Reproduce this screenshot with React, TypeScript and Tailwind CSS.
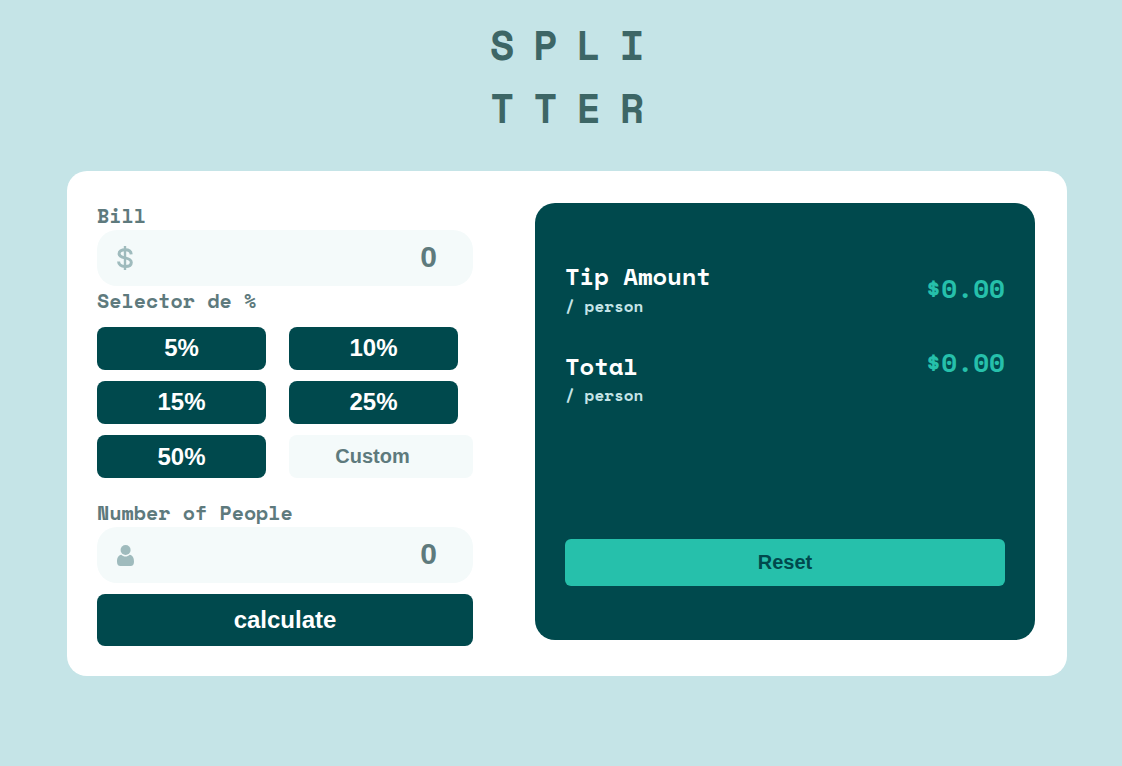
import { useState } from "react";

const mono = "font-['Space_Mono','Liberation_Mono',monospace] font-bold";
const sans = "font-['Liberation_Sans',Arial,sans-serif] font-bold";

function DollarIcon() {
  return (
    <svg width="16" height="24" viewBox="0 0 16 24" fill="none" stroke="#9fbbbd" className="block shrink-0">
      <path d="M14.2 8.3C14 5.3 11.8 3.8 8.1 3.8C4.5 3.8 2.1 5.2 2.1 7.8C2.1 10.3 4.2 11.1 8 11.9C12.1 12.7 14.3 13.6 14.3 16.4C14.3 19 11.8 20.4 8.1 20.4C4.1 20.4 1.6 18.7 1.6 15.4" strokeWidth="3" />
      <path d="M8 0V24" strokeWidth="2.4" />
    </svg>
  );
}

function PersonIcon() {
  return (
    <svg width="17" height="21" viewBox="0 0 17 21" fill="#9fbbbd" className="block shrink-0">
      <circle cx="8.6" cy="5" r="5" />
      <path d="M4.3 9.8C5.4 11 7 11.6 8.5 11.6C10 11.6 11.6 11 12.7 9.8C15.7 10.2 17 13 17 16.8C17 19.6 15.8 21 13.6 21H3.4C1.2 21 0 19.6 0 16.8C0 13 1.3 10.2 4.3 9.8Z" />
    </svg>
  );
}

function Label({ children }: { children: string }) {
  return <div className={`${mono} h-7 text-[20px] leading-7 text-[#5e7a7d]`}>{children}</div>;
}

function Field({ icon, value, onChange }: { icon: React.ReactNode; value: string; onChange: (v: string) => void }) {
  return (
    <div className="flex h-14 items-center rounded-[20px] bg-[#f4fafa] pr-[36px] pl-5">
      {icon}
      <input
        className={`${sans} mb-[2px] min-w-0 flex-1 bg-transparent text-right text-[30px] leading-9 text-[#5e7a7d] outline-none`}
        value={value}
        onChange={(e) => onChange(e.target.value)}
      />
    </div>
  );
}

function Result({ title, amount, className }: { title: string; amount: string; className: string }) {
  return (
    <div className={`flex justify-between ${className}`}>
      <div>
        <div className="h-9 text-[24px] leading-9 tracking-[-0.1px] text-white">{title}</div>
        <div className="h-6 text-[16px] leading-6 text-[#c5e4e7]">/ person</div>
      </div>
      <div className="h-10 text-[26px] leading-10 text-[#26c0ab]">{amount}</div>
    </div>
  );
}

export default function App() {
  const [bill, setBill] = useState("0");
  const [people, setPeople] = useState("0");
  const [custom, setCustom] = useState("");
  const [tip, setTip] = useState(0);
  const [result, setResult] = useState({ tip: 0, total: 0 });

  const calculate = () => {
    const count = Number(people);
    const amount = Number(bill);
    if (!count || !amount) return;
    const rate = (custom ? Number(custom) : tip) / 100;
    setResult({ tip: (amount * rate) / count, total: (amount * (1 + rate)) / count });
  };
  const reset = () => {
    setBill("0");
    setPeople("0");
    setCustom("");
    setTip(0);
    setResult({ tip: 0, total: 0 });
  };

  return (
    <div className="min-h-screen bg-[#c5e4e7] pt-[13px]">
      <h1 className={`${mono} ml-[490px] text-[40px] leading-[63px] tracking-[18.8px] text-[#3d6666]`}>
        SPLI
        <br />
        TTER
      </h1>
      <main className="mt-[32px] ml-[67px] flex h-[505px] w-[1000px] items-start justify-between rounded-[20px] bg-white pt-8 pr-8 pl-[30px]">
        <section className="w-[376px]">
          <div className="-mt-[1px]">
            <Label>Bill</Label>
          </div>
          <Field icon={<DollarIcon />} value={bill} onChange={setBill} />
          <div className="mt-[1px]">
            <Label>Selector de %</Label>
          </div>
          <div className="mt-[12px] grid grid-cols-[169px_184px] gap-x-[23px] gap-y-[11px]">
            {[5, 10, 15, 25, 50].map((n) => (
              <button
                key={n}
                onClick={() => setTip(n)}
                className={`${sans} h-[43px] w-[169px] rounded-[8px] bg-[#00494d] pb-[2px] text-[24px] leading-7 text-white last-of-type:pb-0`}
              >
                {n}%
              </button>
            ))}
            <input
              className={`${sans} h-[43px] w-full rounded-[8px] bg-[#f4fafa] pr-[17px] text-center text-[20px] text-[#5e7a7d] outline-none placeholder:text-[#5e7a7d] placeholder:opacity-100`}
              placeholder="Custom"
              value={custom}
              onChange={(e) => setCustom(e.target.value)}
            />
          </div>
          <div className="mt-[21px]">
            <Label>Number of People</Label>
          </div>
          <Field icon={<PersonIcon />} value={people} onChange={setPeople} />
          <button
            onClick={calculate}
            className={`${sans} mt-[11px] h-[52px] w-full rounded-[8px] bg-[#00494d] text-[24px] leading-7 text-white`}
          >
            calculate
          </button>
        </section>
        <section className={`${mono} flex h-[437px] w-[500px] flex-col rounded-[20px] bg-[#00494d] px-[30px] pt-[55px]`}>
          <Result title="Tip Amount" amount={`$${result.tip.toFixed(2)}`} className="h-[90px] [&>div:last-child]:mt-[10px]" />
          <Result
            title="Total"
            amount={`$${result.total.toFixed(2)}`}
            className="h-[89px] [&>div:first-child>div:last-child]:-mt-px [&>div:last-child]:-mt-[6px]"
          />
          <button
            onClick={reset}
            className={`${sans} mt-[102px] h-[47px] w-full rounded-[6px] bg-[#26c0ab] pb-[2px] text-[20px] leading-6 text-[#00494d]`}
          >
            Reset
          </button>
        </section>
      </main>
    </div>
  );
}
